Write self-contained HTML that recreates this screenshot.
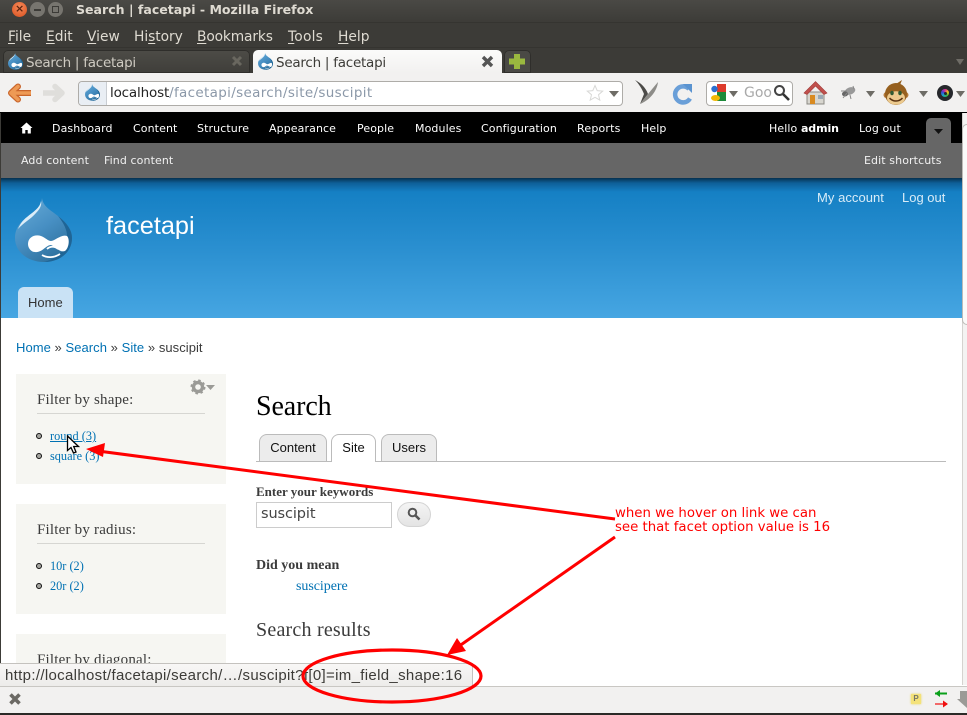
<!DOCTYPE html>
<html><head><meta charset="utf-8"><title>Search | facetapi - Mozilla Firefox</title>
<style>
html,body{margin:0;padding:0;width:967px;height:715px;overflow:hidden;background:#fff}
#w{position:relative;width:967px;height:715px;overflow:hidden;font-family:"Liberation Sans",sans-serif}
.a,.t{position:absolute}
.t{white-space:nowrap;line-height:16px}
.ch{font-family:"DejaVu Sans",sans-serif;color:#dfdbd2;font-size:13.8px}
.u{text-decoration:underline;text-underline-offset:2px}
.bar{font-family:"DejaVu Sans",sans-serif;font-size:11px;color:#fff;letter-spacing:.1px}
.s{font-family:"Liberation Serif",serif}
.lk{color:#0071b3}
.blk{position:absolute;left:16px;width:210px;background:#f6f6f2}
.bt{position:absolute;left:37px;font:15px/18px "Liberation Serif",serif;color:#3b3b3b;letter-spacing:.2px;white-space:nowrap}
.hr{position:absolute;left:37px;width:168px;height:1px;background:#d6d6d2}
.dot{position:absolute;left:36px;width:4px;height:4px;border:1px solid #111;border-radius:50%;background:#a5a5a0}
.li{position:absolute;left:50px;font:12.3px/16px "Liberation Serif",serif;color:#0071b3;white-space:nowrap}
.tab{position:absolute;top:434px;height:26px;border:1px solid #bbb;border-bottom:0;border-radius:8px 8px 0 0;background:#ececec;font:13px/26px "Liberation Sans",sans-serif;color:#111;text-align:center}
</style></head><body><div id="w">
<svg width="0" height="0" style="position:absolute"><defs>
<linearGradient id="dg" x1="0" y1="0" x2="0.6" y2="1"><stop offset="0" stop-color="#6aaed9"/><stop offset=".55" stop-color="#478fc3"/><stop offset="1" stop-color="#2f729f"/></linearGradient>
<symbol id="dr" viewBox="0 0 57 65">
<path d="M27 0C28 8 34 11 43 18C52 25 57 32 57 40C57 54 45 64 29 64C13 64 0 54 0 40C0 28 8 22 14 18C20 14 26 10 27 0Z" fill="url(#dg)"/>
<path d="M43 18C52 25 57 32 57 40C57 54 45 64 29 64C44 60 53 50 52 36C51 29 47 23 43 18Z" fill="#1f6596"/>
<path d="M26 3C25 10 18 14 12 19C8 22 5 26 3 31C8 25 16 21 21 15C25 11 27 7 26 3Z" fill="#dcedf8"/>
<path d="M13 46C13 39 20 36 26 38C31 40 33 43 36 43C40 43 46 36 52 38C55 41 54 50 50 53C45 55 41 49 36 47C31 47 27 55 20 54C16 54 13 50 13 46Z" fill="#fff"/>
<path d="M32 51C35 48 40 48 43 51M27 57C32 60 39 60 45 56" fill="none" stroke="#fff" stroke-width="1.800"/>
</symbol>
</defs></svg>

<!-- window chrome -->
<div class="a" style="left:0;top:0;width:967px;height:23px;background:linear-gradient(#4a4945,#3c3b37)"></div>
<div class="a" style="left:0;top:23px;width:967px;height:50px;background:#3c3b37"></div>
<div class="a" style="left:0;top:22px;width:967px;height:1px;background:#353430"></div>
<div class="a" style="left:0;top:47px;width:967px;height:1px;background:#353430"></div>
<div class="a" style="left:12px;top:2px;width:15px;height:15px;border-radius:50%;background:radial-gradient(circle at 50% 35%,#f58a5a,#d9501e)"></div>
<div class="t" style="left:15px;top:1px;font:bold 11px/16px 'DejaVu Sans',sans-serif;color:#5a2410">×</div>
<div class="a" style="left:30px;top:2px;width:15px;height:15px;border-radius:50%;background:#77756f"></div>
<div class="a" style="left:34px;top:9px;width:7px;height:2px;background:#3c3b37"></div>
<div class="a" style="left:48px;top:2px;width:15px;height:15px;border-radius:50%;background:#77756f"></div>
<div class="a" style="left:52px;top:6px;width:5px;height:5px;border:1px solid #3c3b37"></div>
<div class="t ch" style="left:76px;top:2px;font-weight:bold;font-size:12.55px;color:#dfdbd2">Search | facetapi - Mozilla Firefox</div>

<div class="t ch" style="left:8px;top:29px"><span class="u">F</span>ile</div>
<div class="t ch" style="left:46px;top:29px"><span class="u">E</span>dit</div>
<div class="t ch" style="left:87px;top:29px"><span class="u">V</span>iew</div>
<div class="t ch" style="left:134px;top:29px;letter-spacing:-.05px">Hi<span class="u">s</span>tory</div>
<div class="t ch" style="left:197px;top:29px;letter-spacing:-.15px"><span class="u">B</span>ookmarks</div>
<div class="t ch" style="left:288px;top:29px;letter-spacing:.2px"><span class="u">T</span>ools</div>
<div class="t ch" style="left:338px;top:29px"><span class="u">H</span>elp</div>

<!-- tabs -->
<div class="a" style="left:3px;top:50px;width:247px;height:23px;background:linear-gradient(#4d4c47,#3f3e3a);border-radius:5px 5px 0 0;box-shadow:inset 0 0 0 1px #2f2e2b"></div>
<svg class="a" style="left:8px;top:53px" width="15" height="17"><use href="#dr" width="15" height="17"/></svg>
<div class="t ch" style="left:26px;top:55px;font-size:13.5px;color:#cfcbc2;letter-spacing:-.25px">Search | facetapi</div>
<svg class="a" style="left:231px;top:55px" width="12" height="12"><path d="M2 2L10 10M10 2L2 10" stroke="#69675f" stroke-width="3"/></svg>
<div class="a" style="left:253px;top:50px;width:249px;height:23px;background:linear-gradient(#fbfbfa,#f2f1f0);border-radius:5px 5px 0 0"></div>
<svg class="a" style="left:258px;top:53px" width="15" height="17"><use href="#dr" width="15" height="17"/></svg>
<div class="t ch" style="left:276px;top:55px;font-size:13.5px;color:#3c3b37;letter-spacing:-.25px">Search | facetapi</div>
<svg class="a" style="left:481px;top:55px" width="13" height="13"><path d="M2 2L11 11M11 2L2 11" stroke="#555" stroke-width="3.400"/></svg>
<div class="a" style="left:504px;top:50px;width:27px;height:23px;background:#4a4945;border-radius:5px 5px 0 0;box-shadow:inset 0 0 0 1px #2f2e2b"></div>
<svg class="a" style="left:508px;top:53px" width="18" height="17"><path d="M9 1V16M1 8.500H17" stroke="#9ab83f" stroke-width="6"/></svg>
<svg class="a" style="left:955px;top:58px" width="10" height="8"><path d="M1 1H9L5 7Z" fill="#6e6c66"/></svg>

<!-- nav bar -->
<div class="a" style="left:0;top:73px;width:967px;height:39px;background:#f2f1f0"></div>
<div class="a" style="left:0;top:112px;width:967px;height:1px;background:#000"></div>
<svg class="a" style="left:6px;top:83px" width="25" height="20"><path d="M27 10H5M12 3.500L5 10L12 16.500" fill="none" stroke="#c9652b" stroke-width="6" stroke-linecap="round" stroke-linejoin="round"/><path d="M27 10H5M12 3.500L5 10L12 16.500" fill="none" stroke="#ee9a55" stroke-width="3.600" stroke-linecap="round" stroke-linejoin="round"/></svg>
<svg class="a" style="left:43px;top:83px" width="24" height="20"><path d="M0 10H19M12 3.500L19 10L12 16.500" fill="none" stroke="#dfdedb" stroke-width="5.500" stroke-linecap="round" stroke-linejoin="round"/></svg>
<div class="a" style="left:78px;top:81px;width:543px;height:23px;background:#fff;border:1px solid #aeaca8;border-radius:4px"></div>
<div class="a" style="left:79px;top:82px;width:27px;height:23px;background:#e9eef4;border-right:1px solid #c9cdd2;border-radius:3px 0 0 3px"></div>
<svg class="a" style="left:85px;top:84px" width="15" height="17"><use href="#dr" width="15" height="17"/></svg>
<div class="t ch" style="left:110px;top:85px;font-size:13.5px;letter-spacing:.33px;color:#8b98a8"><span style="color:#222;letter-spacing:-.17px">localhost</span>/facetapi/search/site/suscipit</div>
<svg class="a" style="left:586px;top:84px" width="18" height="18"><path d="M9 1.500L11.200 6.600L16.700 7.100L12.500 10.700L13.800 16.100L9 13.300L4.200 16.100L5.500 10.700L1.300 7.100L6.800 6.600Z" fill="#fff" stroke="#d8d8d6"/></svg>
<svg class="a" style="left:609px;top:91px" width="10" height="7"><path d="M0 0H10L5 6Z" fill="#6e6c66"/></svg>
<svg class="a" style="left:635px;top:80px" width="24" height="25"><path d="M0 0C6 3 11 8 13 14L5 24L9 14C7 9 4 4 0 0Z" fill="#4c4b48"/><path d="M13 14L23 2C22 11 15 20 5 24Z" fill="#8d8c88"/></svg>
<svg class="a" style="left:672px;top:83px" width="22" height="23"><path d="M17 6A8 8 0 1 0 18 15.500" fill="none" stroke="#6a9fd8" stroke-width="4.500"/><path d="M11 1H20V10Z" fill="#5a93d0"/></svg>
<div class="a" style="left:706px;top:81px;width:85px;height:23px;background:#fff;border:1px solid #aeaca8;border-radius:4px"></div>
<svg class="a" style="left:711px;top:84px" width="16" height="18"><rect x="6" y="0" width="9" height="8" fill="#dd3b2c"/><rect x="6" y="8" width="9" height="9" fill="#1d8a3a"/><circle cx="3.500" cy="5" r="3.200" fill="#2c6fd0"/><ellipse cx="4.500" cy="14" rx="4.500" ry="3" fill="#f2b705"/></svg>
<svg class="a" style="left:729px;top:91px" width="9" height="6"><path d="M0 0H9L4.500 6Z" fill="#6e6c66"/></svg>
<div class="t" style="left:744px;top:85px;font:14px/16px 'DejaVu Sans',sans-serif;color:#a9a9a9">Goo</div>
<svg class="a" style="left:773px;top:84px" width="18" height="18"><circle cx="6.500" cy="6.500" r="4.500" fill="none" stroke="#444" stroke-width="2"/><path d="M10 10L16 16" stroke="#333" stroke-width="2.600"/></svg>
<svg class="a" style="left:803px;top:81px" width="25" height="24"><path d="M4 11H21V23H4Z" fill="#d8d6cf" stroke="#8c8a84"/><path d="M1 12L12.500 .5L24 12L21 13.500L12.500 5L4 13.500Z" fill="#c0504d" stroke="#a13b38" stroke-width=".6"/><rect x="7" y="14" width="5" height="9" fill="#d98a20"/><rect x="15" y="14" width="5" height="4" fill="#9aa9b5"/></svg>
<svg class="a" style="left:839px;top:85px" width="18" height="15"><ellipse cx="11" cy="6" rx="5.500" ry="3.600" fill="#999" transform="rotate(-20 11 6)"/><ellipse cx="6" cy="9" rx="3" ry="2.500" fill="#666"/><path d="M2 6H8M4 13L8 8M11 10L12 14M14 1L15 4" stroke="#888"/></svg>
<svg class="a" style="left:866px;top:91px" width="9" height="6"><path d="M0 0H9L4.500 6Z" fill="#6e6c66"/></svg>
<svg class="a" style="left:883px;top:80px" width="26" height="26"><circle cx="3.500" cy="15" r="3" fill="#b57a3a"/><circle cx="22.500" cy="15" r="3" fill="#b57a3a"/><circle cx="13" cy="14" r="11" fill="#96601f"/><path d="M13 4L19 0L17 5Z" fill="#96601f"/><ellipse cx="13" cy="18" rx="9" ry="6.800" fill="#ecca8e"/><ellipse cx="9" cy="13" rx="1.800" ry="2.300" fill="#2f5a33"/><ellipse cx="17" cy="13" rx="1.800" ry="2.300" fill="#2f5a33"/><path d="M6.500 18C10 22 16 22 19.500 18" fill="none" stroke="#5a3210" stroke-width="1.500"/></svg>
<svg class="a" style="left:919px;top:91px" width="9" height="6"><path d="M0 0H9L4.500 6Z" fill="#6e6c66"/></svg>
<div class="a" style="left:937px;top:85px;width:16px;height:16px;border-radius:50%;background:#26282c"></div>
<div class="a" style="left:941px;top:89px;width:8px;height:8px;border-radius:50%;background:conic-gradient(#e02b9b,#f2c511,#31b34a,#18a7c9,#3a45d6,#e02b9b)"></div>
<div class="a" style="left:944px;top:92px;width:3px;height:3px;border-radius:50%;background:#26282c"></div>
<svg class="a" style="left:956px;top:91px" width="9" height="6"><path d="M0 0H9L4.500 6Z" fill="#6e6c66"/></svg>

<!-- page backdrop -->
<div class="a" style="left:0;top:113px;width:962px;height:30px;background:#000"></div>
<div class="a" style="left:0;top:143px;width:962px;height:35px;background:#666"></div>
<div class="a" style="left:0;top:178px;width:962px;height:140px;background:linear-gradient(#06304f 0,#0e5f97 5px,#1580c4 14px,#2a8fd0 70px,#46a6e2 140px)"></div>
<div class="a" style="left:0;top:113px;width:1px;height:600px;background:#3c3b37"></div>

<!-- toolbar -->
<svg class="a" style="left:20px;top:122px" width="13" height="12"><path d="M6.500 .5L12.500 6H10.800V11.500H7.700V8H5.300V11.500H2.200V6H.5Z" fill="#fff"/></svg>
<div class="t bar" style="left:52px;top:121px">Dashboard</div>
<div class="t bar" style="left:133px;top:121px">Content</div>
<div class="t bar" style="left:197px;top:121px">Structure</div>
<div class="t bar" style="left:269px;top:121px">Appearance</div>
<div class="t bar" style="left:357px;top:121px">People</div>
<div class="t bar" style="left:415px;top:121px">Modules</div>
<div class="t bar" style="left:481px;top:121px">Configuration</div>
<div class="t bar" style="left:577px;top:121px;letter-spacing:.2px">Reports</div>
<div class="t bar" style="left:641px;top:121px">Help</div>
<div class="t bar" style="left:769px;top:121px">Hello <b style="letter-spacing:-.1px">admin</b></div>
<div class="t bar" style="left:859px;top:121px">Log out</div>
<div class="a" style="left:926px;top:118px;width:25px;height:25px;background:#666;border-radius:5px 5px 0 0"></div>
<svg class="a" style="left:934px;top:129px" width="9" height="5"><path d="M0 0H9L4.500 5Z" fill="#111"/></svg>
<div class="t bar" style="left:21px;top:153px;color:#f0f0f0">Add content</div>
<div class="t bar" style="left:104px;top:153px;color:#f0f0f0">Find content</div>
<div class="t bar" style="left:864px;top:153px;color:#f0f0f0">Edit shortcuts</div>

<!-- header -->
<svg class="a" style="left:15px;top:198px" width="57" height="65"><use href="#dr" width="57" height="65"/></svg>
<div class="t" style="left:106px;top:210px;font-size:25.3px;line-height:32px;color:#fff">facetapi</div>
<div class="t" style="left:817px;top:190px;font-size:13px;color:#d9ecf8;letter-spacing:.05px">My account</div>
<div class="t" style="left:902px;top:190px;font-size:13px;color:#d9ecf8">Log out</div>
<div class="a" style="left:18px;top:287px;width:55px;height:31px;background:#c9e2f5;border-radius:6px 6px 0 0"></div>
<div class="t" style="left:28px;top:295px;font-size:13px;color:#333">Home</div>

<!-- scrollbar -->
<div class="a" style="left:962px;top:113px;width:5px;height:572px;background:#f4f3f2;border-left:1px solid #d5d3cf;box-sizing:border-box"></div>
<div class="a" style="left:962px;top:124px;width:5px;height:201px;background:#fbfbfa;border:1px solid #bdbbb7;border-right:0;border-radius:5px 0 0 5px;box-sizing:border-box"></div>

<!-- breadcrumb -->
<div class="t" style="left:16px;top:340px;font-size:13px;color:#3b3b3b;letter-spacing:.05px"><span class="lk">Home</span> » <span class="lk">Search</span> » <span class="lk">Site</span> » suscipit</div>

<!-- sidebar -->
<div class="blk" style="top:374px;height:110px"></div>
<svg class="a" style="left:190px;top:379px" width="26" height="17"><circle cx="8" cy="8" r="4.500" fill="none" stroke="#9b9b97" stroke-width="3.400"/><circle cx="8" cy="8" r="6.500" fill="none" stroke="#9b9b97" stroke-width="2" stroke-dasharray="2.500 2.600"/><path d="M16 6H25L20.500 11Z" fill="#9b9b97"/></svg>
<div class="bt" style="top:391px">Filter by shape:</div><div class="hr" style="top:413px"></div>
<div class="dot" style="top:433px"></div><div class="li" style="top:428px;text-decoration:underline">round (3)</div>
<div class="dot" style="top:453px"></div><div class="li" style="top:448px">square (3)</div>

<div class="blk" style="top:504px;height:110px"></div>
<div class="bt" style="top:521px">Filter by radius:</div><div class="hr" style="top:543px"></div>
<div class="dot" style="top:563px"></div><div class="li" style="top:558px">10r (2)</div>
<div class="dot" style="top:583px"></div><div class="li" style="top:578px">20r (2)</div>

<div class="blk" style="top:634px;height:40px"></div>
<div class="bt" style="top:651px">Filter by diagonal:</div>

<!-- main -->
<div class="t s" style="left:256px;top:391px;font-size:28px;line-height:32px;color:#000;letter-spacing:-.1px">Search</div>
<div class="tab" style="left:259px;width:66px">Content</div>
<div class="tab" style="left:331px;width:43px;height:27px;background:#fff;z-index:2">Site</div>
<div class="tab" style="left:381px;width:54px">Users</div>
<div class="a" style="left:256px;top:461px;width:690px;height:1px;background:#bbb"></div>
<div class="t s" style="left:256px;top:484px;font-size:13px;font-weight:bold;color:#3b3b3b">Enter your keywords</div>
<div class="a" style="left:256px;top:502px;width:134px;height:24px;border:1px solid #ccc;background:#fff"></div>
<div class="t" style="left:261px;top:506px;font:14.5px/16px 'DejaVu Sans',sans-serif;color:#444;letter-spacing:-.1px">suscipit</div>
<div class="a" style="left:397px;top:502px;width:32px;height:23px;border:1px solid #d4d4d4;border-radius:13px;background:linear-gradient(#f4f4f4,#e4e4e4)"></div>
<svg class="a" style="left:407px;top:507px" width="14" height="14"><circle cx="5.500" cy="5.500" r="3.800" fill="none" stroke="#555" stroke-width="2"/><path d="M8.500 8.500L12.500 12.500" stroke="#555" stroke-width="2.600"/></svg>
<div class="t s" style="left:256px;top:558px;font-size:14px;font-weight:bold;color:#3b3b3b">Did you mean</div>
<div class="t s lk" style="left:296px;top:579px;font-size:14px;letter-spacing:-.05px">suscipere</div>
<div class="t s" style="left:256px;top:618px;font-size:20px;line-height:24px;color:#3b3b3b;letter-spacing:.22px">Search results</div>

<!-- status -->
<div class="a" style="left:0;top:663px;width:472px;height:22px;background:linear-gradient(#f8f7f6,#edecea);border:1px solid #c4c2be;border-left:0;box-sizing:content-box"></div>
<div class="t" style="left:5px;top:668px;font:15px/16px 'Liberation Sans',sans-serif;color:#3c3b37;letter-spacing:.33px">http://localhost/facetapi/search/…/suscipit?f[0]=im_field_shape:16</div>
<div class="a" style="left:0;top:686px;width:967px;height:27px;background:#f2f1f0;border-top:1px solid #c9c7c3;box-sizing:border-box"></div>
<div class="a" style="left:0;top:713px;width:967px;height:2px;background:#2b2a27"></div>
<svg class="a" style="left:8px;top:692px" width="14" height="14"><path d="M2.500 2.500L11.500 11.500M11.500 2.500L2.500 11.500" stroke="#6b6964" stroke-width="3.600"/></svg>
<div class="a" style="left:911px;top:694px;width:10px;height:10px;background:#f4e27a;box-shadow:0 0 2px #e6d35c;font:bold 8px/10px 'Liberation Sans',sans-serif;color:#776;text-align:center">P</div>
<svg class="a" style="left:934px;top:690px" width="15" height="18"><path d="M1 3.500H13" stroke="#0aa01a" stroke-width="2"/><path d="M1 3.500L6 0V7Z" fill="#0aa01a"/><path d="M1 14H13" stroke="#f26a6a" stroke-width="2"/><path d="M14 14L9 10.500V17.500Z" fill="#f01010"/></svg>
<svg class="a" style="left:957px;top:691px" width="10" height="17"><path d="M3 0H10V17L0 8H3Z" fill="#9b9a96"/></svg>

<!-- cursor -->
<svg class="a" style="left:66px;top:435px" width="14" height="20"><path d="M1.500 1V15.500L5 12.500L7.500 18L10 17L7.700 11.500L12.500 11.500Z" fill="#fff" stroke="#000" stroke-width="1.300"/></svg>

<!-- annotations -->
<svg class="a" style="left:0;top:0" width="967" height="715">
<path d="M615 519L98 451" stroke="#f00" stroke-width="3" fill="none"/>
<path d="M86 449L105 443L103 457Z" fill="#f00"/>
<path d="M615 537L455 649" stroke="#f00" stroke-width="3" fill="none"/>
<path d="M447 655L457 638L466 651Z" fill="#f00"/>
<ellipse cx="392" cy="676" rx="89" ry="26" fill="none" stroke="#f00" stroke-width="3.200"/>
</svg>
<div class="t" style="left:615px;top:506px;font:13.3px/16px 'DejaVu Sans',sans-serif;color:#f00">when we hover on link we can</div>
<div class="t" style="left:615px;top:520px;font:13.3px/16px 'DejaVu Sans',sans-serif;color:#f00">see that facet option value is 16</div>
</div></body></html>
